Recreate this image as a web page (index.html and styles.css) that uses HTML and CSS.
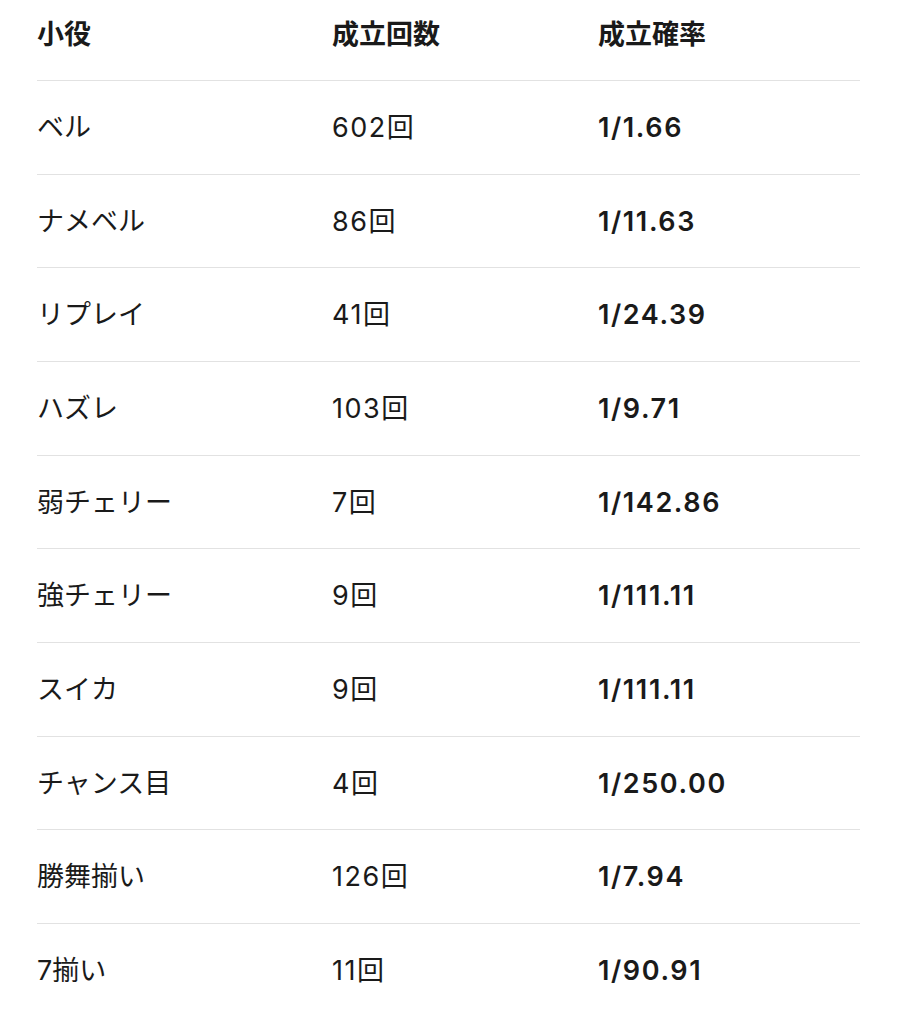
FILE: index.html
```html
<!DOCTYPE html>
<html lang="ja">
<head>
<meta charset="utf-8">
<title>小役</title>
<link rel="stylesheet" href="styles.css">
</head>
<body>
<table class="stats">
  <colgroup>
    <col class="c1"><col class="c2"><col class="c3">
  </colgroup>
  <thead>
    <tr><th>小役</th><th>成立回数</th><th>成立確率</th></tr>
  </thead>
  <tbody>
    <tr><td>ベル</td><td class="count">602回</td><td class="prob">1/1.66</td></tr>
    <tr><td>ナメベル</td><td class="count">86回</td><td class="prob">1/11.63</td></tr>
    <tr><td>リプレイ</td><td class="count">41回</td><td class="prob">1/24.39</td></tr>
    <tr><td>ハズレ</td><td class="count">103回</td><td class="prob">1/9.71</td></tr>
    <tr><td>弱チェリー</td><td class="count">7回</td><td class="prob">1/142.86</td></tr>
    <tr><td>強チェリー</td><td class="count">9回</td><td class="prob">1/111.11</td></tr>
    <tr><td>スイカ</td><td class="count">9回</td><td class="prob">1/111.11</td></tr>
    <tr><td>チャンス目</td><td class="count">4回</td><td class="prob">1/250.00</td></tr>
    <tr><td>勝舞揃い</td><td class="count">126回</td><td class="prob">1/7.94</td></tr>
    <tr><td>7揃い</td><td class="count">11回</td><td class="prob">1/90.91</td></tr>
  </tbody>
</table>
</body>
</html>
```
FILE: styles.css
```css
html, body {
  margin: 0;
  padding: 0;
  background: #ffffff;
}
body {
  padding: 0 38px 0 37px;
  font-family: "Inter", "Noto Sans CJK JP", sans-serif;
  color: #1a1a1a;
}
.stats {
  width: 100%;
  border-collapse: collapse;
  table-layout: fixed;
}
.c1 { width: 295px; }
.c2 { width: 266px; }
.stats th,
.stats td {
  text-align: left;
  font-size: 27px;
  line-height: 38px;
  padding: 0;
  border-bottom: 1px solid #e2e2e2;
}
.stats th {
  font-weight: 700;
  padding-top: 16px;
  padding-bottom: 26px;
}
.stats td {
  font-weight: 400;
  padding-top: 28px;
  padding-bottom: 26.67px;
}
.stats tbody tr:last-child td {
  border-bottom: none;
}
.stats td.count {
  letter-spacing: 1.5px;
}
.stats td.prob {
  font-weight: 600;
  letter-spacing: 1.6px;
}
```
